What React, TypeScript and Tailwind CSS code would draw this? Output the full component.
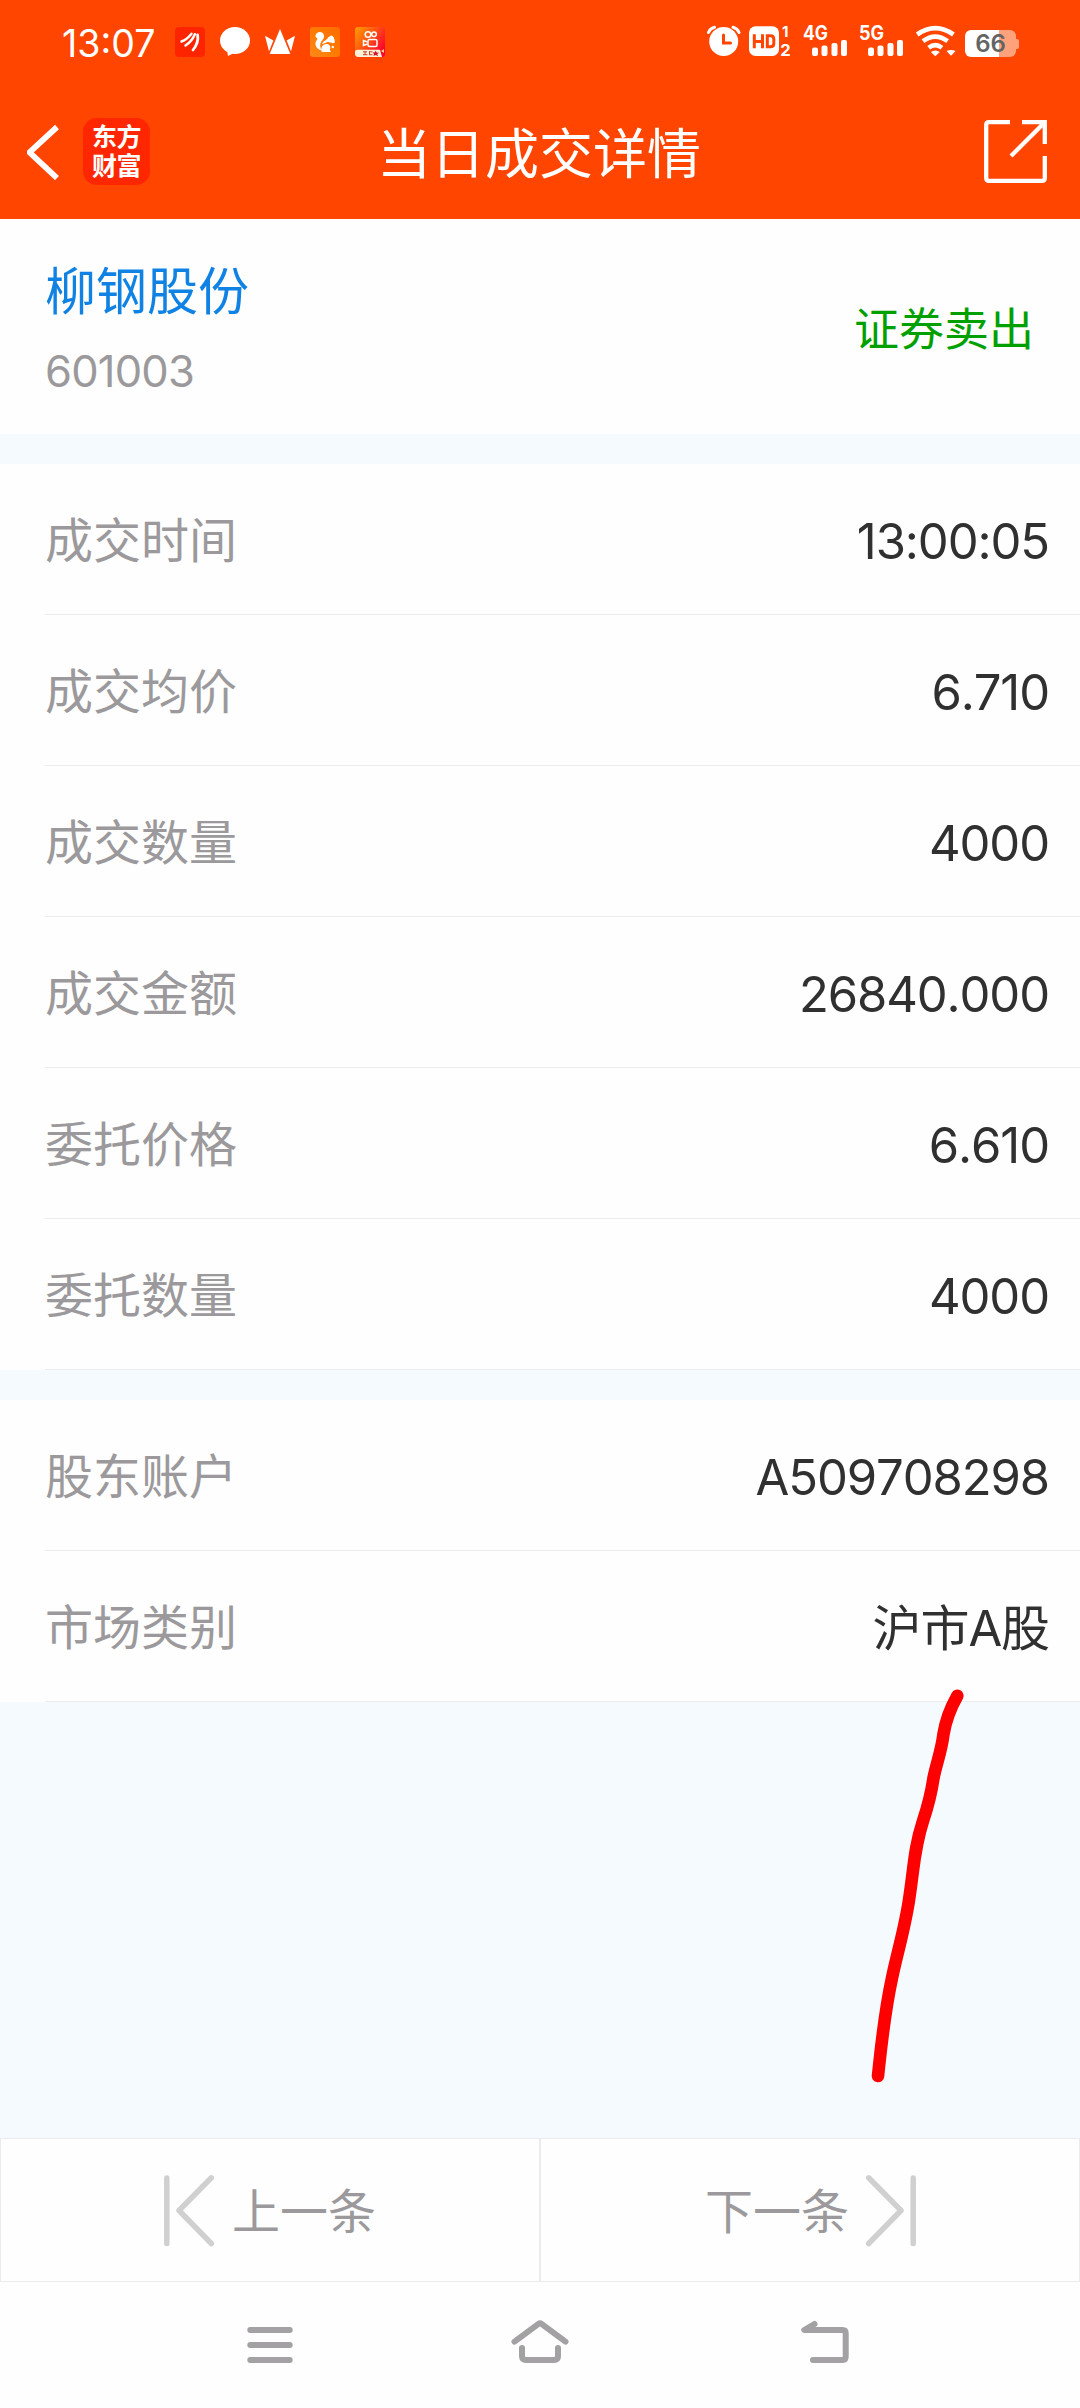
import React from "react";

const CJK = "font-['Inter','Noto_Sans_CJK_SC',sans-serif]";

function EastMoneyMini() {
  return (
    <svg className="h-[30px] w-[30px]" viewBox="0 0 30 30">
      <rect width="30" height="30" rx="4" fill="#ff2400" />
      <g fill="none" stroke="#fff" strokeLinecap="round">
        <path d="M6.500 14.500C11 13 14 10 16.500 6.800" strokeWidth="2.400" />
        <path d="M10.500 18.500C15 15.500 18 12 19.800 7.200" strokeWidth="2.500" />
        <path d="M18 23C22 18 23.500 13 22.600 8" strokeWidth="2.800" />
      </g>
    </svg>
  );
}

function ChatBubble() {
  return (
    <svg className="h-[30px] w-[30px]" viewBox="0 0 30 30">
      <ellipse cx="15" cy="13.500" rx="15" ry="13.500" fill="#fff" />
      <path d="M7 23L8 29L16 25Z" fill="#fff" />
    </svg>
  );
}

function Crown() {
  return (
    <svg className="h-[30px] w-[30px]" viewBox="0 0 30 30" fill="#fff">
      <path d="M15 2L25.300 27H4.700Z" />
      <path d="M0 8.800L8.400 13.500L4 24.500Z" />
      <path d="M30 8.800L21.600 13.500L26 24.500Z" />
    </svg>
  );
}

function Squirrel() {
  return (
    <svg className="h-[30px] w-[30px]" viewBox="0 0 30 30">
      <defs>
        <linearGradient id="uc" x1="0" y1="1" x2="1" y2="0">
          <stop offset="0" stopColor="#ff8a1c" />
          <stop offset="0.500" stopColor="#ff7a00" />
          <stop offset="1" stopColor="#ff6a00" />
        </linearGradient>
      </defs>
      <rect width="30" height="30" rx="3" fill="url(#uc)" />
      <path
        d="M7 6C9 4.500 12.500 4.800 13.700 7.500C15 10 13 12.500 11.300 14.500C9.500 17 10 20 11.500 23.500C6 22 4 17 6.500 13.500C8 11.500 7.500 11 6 10.500C5 9 5.500 7 7 6Z"
        fill="#fff"
      />
      <path d="M12 17C13.500 13 17 13.500 18 10.500L21 8.500C24 9 24.500 12 25 15.500C21 17.500 20 14 16.500 15.500C14.500 16.300 13 17 12 17Z" fill="#fff" />
      <path d="M11.500 24.500C10.500 19.500 13.500 16.500 17 17C20 17.500 21.300 20.500 19.800 23L21 25H12Z" fill="#fff" />
      <circle cx="22.800" cy="20" r="1.200" fill="#fff" />
    </svg>
  );
}

function VideoApp() {
  return (
    <svg className="h-[30px] w-[30px]" viewBox="0 0 30 30">
      <defs>
        <linearGradient id="ks" x1="0" y1="0" x2="1" y2="0.700">
          <stop offset="0" stopColor="#ffa000" />
          <stop offset="0.450" stopColor="#ff5a10" />
          <stop offset="1" stopColor="#ff0030" />
        </linearGradient>
      </defs>
      <rect width="30" height="30" rx="3" fill="url(#ks)" />
      <g fill="none" stroke="#fff" strokeWidth="1.500">
        <circle cx="13" cy="7.500" r="2.800" />
        <circle cx="19" cy="7.200" r="2.300" />
        <rect x="13" y="12.500" width="9" height="7" rx="1.500" />
        <path d="M12.500 15L8.500 13.500V18.500L12.500 17" />
      </g>
      <path d="M0 25C0 23.500 1 22.700 3 22.700H25L27 30H3C1 30 0 28.500 0 27Z" fill="#fff0d8" />
      <g fill="none" stroke="#c8402c" strokeWidth="1">
        <path d="M8 24.800H12M8 27.700H12.500M10 24.800V27.700M14 24.800H17.500M14 27.700H17.500M14.500 24.800V27.700" />
      </g>
      <path d="M20.500 23.500L21.700 25.500L24 25.700L22.300 27L23 29.200L20.700 28L18.500 29L19 27L17.700 25.500L20 25.300Z" fill="#d0142c" />
      <path d="M26 24L29 22V26Z" fill="#ffd27a" />
    </svg>
  );
}

function Alarm() {
  return (
    <svg className="h-[34px] w-[34px]" viewBox="708 26 34 34">
      <circle cx="724.700" cy="42.600" r="14.500" fill="#fff" />
      <path d="M724.500 36V44H731.500" fill="none" stroke="#ff4500" strokeWidth="3" strokeLinecap="round" />
      <path d="M709.500 33.500Q711 29.500 715.500 28.300M740 33.500Q738.500 29.500 734 28.300" fill="none" stroke="#fff" strokeWidth="3" strokeLinecap="round" />
    </svg>
  );
}

function HdVoice() {
  return (
    <svg className="h-[50px] w-[44px]" viewBox="750 18 44 50">
      <rect x="750" y="27.300" width="30" height="29.700" rx="6.500" fill="#fff" />
      <g fill="none" stroke="#ff4500" strokeWidth="3">
        <path d="M755.300 35.300V49.300M763.500 35.300V49.300M755.300 42.500H763.500" />
        <path d="M768.300 36.800H771.500Q774.800 36.800 774.800 40V44.600Q774.800 47.800 771.500 47.800H768.300Z" />
      </g>
      <text x="783" y="38.300" fontSize="15" fontWeight="700" fill="#fff" fontFamily="Inter">1</text>
      <text x="781.300" y="57" fontSize="16.500" fontWeight="700" fill="#fff" fontFamily="Inter">2</text>
    </svg>
  );
}

function Signal({ label }: { label: string }) {
  return (
    <svg className="h-[50px] w-[46px]" viewBox="0 18 46 50">
      <text x="0" y="41.300" fontSize="19.500" fontWeight="700" fill="#fff" fontFamily="Inter" textLength="25" lengthAdjust="spacingAndGlyphs">
        {label}
      </text>
      <g fill="#fff">
        <rect x="9" y="48.500" width="6" height="8.500" rx="2" />
        <rect x="18.500" y="46.500" width="6" height="10.500" rx="2" />
        <rect x="28.500" y="44" width="6" height="13" rx="2" />
        <rect x="38" y="41" width="6" height="16" rx="2" />
      </g>
    </svg>
  );
}

function Wifi() {
  return (
    <svg className="h-[34px] w-[42px]" viewBox="916 26 42 34">
      <g fill="none" stroke="#fff" strokeWidth="4.600">
        <path d="M918.200 35.500Q936.300 22.800 954.400 35.500" />
        <path d="M924 42.200Q936.300 33 948.600 42.200" />
        <path d="M929.700 48.700Q936.300 43.500 942.900 48.700" />
      </g>
      <path d="M931.800 53Q936.300 50 940.800 53L936.300 57.300Z" fill="#fff" />
      <path d="M947.500 52Q952 50 956.500 52L952 56.800Z" fill="#fff" />
    </svg>
  );
}

function Battery() {
  return (
    <div className="flex items-center">
      <div className={`flex h-[27px] w-[51px] items-center justify-center rounded-[6px] bg-[linear-gradient(to_right,#fff_66%,#ffa27c_66%)] text-[24px] leading-[27px] font-semibold text-[#646464] ${CJK}`}>
        66
      </div>
      <div className="h-[10px] w-[3px] rounded-r-[2px] bg-[#ffa27c]" />
    </div>
  );
}

function Row({ label, value }: { label: string; value: string }) {
  return (
    <div className="flex h-[151px] flex-col bg-[#fefefe]">
      <div className="flex flex-1 items-center justify-between pr-[31px] pl-[45px]">
        <span className="pt-1 text-[48px] leading-none text-[#9b999b]">{label}</span>
        <span className="pt-1 text-[49px] leading-none tracking-[-1.100px] text-[#303030] [font-kerning:none]">{value}</span>
      </div>
      <div className="ml-[45px] h-px bg-[#ececec]" />
    </div>
  );
}

const trade = [
  ["成交时间", "13:00:05"],
  ["成交均价", "6.710"],
  ["成交数量", "4000"],
  ["成交金额", "26840.000"],
  ["委托价格", "6.610"],
  ["委托数量", "4000"],
];

const account = [
  ["股东账户", "A509708298"],
  ["市场类别", "沪市A股"],
];

export default function App() {
  return (
    <div lang="zh-CN" className={`relative flex h-[2408px] w-[1080px] flex-col overflow-hidden bg-[#f5faff] ${CJK}`}>
      <header className="flex h-[219px] shrink-0 flex-col bg-[#ff4500] text-white">
        <div className="flex h-[84px] items-center justify-between pr-[61px] pl-[62px]">
          <div className="flex items-center">
            <span className="w-[113px] pt-1 text-[37.500px] leading-none">13:07</span>
            <div className="flex gap-[15px]">
              <EastMoneyMini />
              <ChatBubble />
              <Crown />
              <Squirrel />
              <VideoApp />
            </div>
          </div>
          <div className="flex items-center">
            <Alarm />
            <div className="ml-2"><HdVoice /></div>
            <div className="ml-[10px]"><Signal label="4G" /></div>
            <div className="ml-[10px]"><Signal label="5G" /></div>
            <div className="ml-[10px]"><Wifi /></div>
            <div className="ml-2 pt-[3px]"><Battery /></div>
          </div>
        </div>
        <div className="flex h-[135px] items-center justify-between pr-[33px] pl-[27px]">
          <div className="flex w-[260px] items-center">
            <svg className="h-[56px] w-[34px]" viewBox="27 123 34 56">
              <path d="M57 126L29.500 151.300L57 177" fill="none" stroke="#fff" strokeWidth="5.800" />
            </svg>
            <div className="ml-[22px] flex h-[67px] w-[67px] flex-col items-center justify-center rounded-[14px] bg-[#ff2600] text-[25px] leading-[29px] font-bold tracking-[-0.500px]">
              <span>东方</span>
              <span>财富</span>
            </div>
          </div>
          <h1 className="pt-[7px] text-[54px] leading-none">当日成交详情</h1>
          <div className="flex w-[256px] justify-end">
            <svg className="h-[63px] w-[63px]" viewBox="984 120 63 63">
              <g fill="none" stroke="#fff" strokeWidth="4.300">
                <path d="M1010 122.200H989Q986.200 122.200 986.200 125V178Q986.200 180.800 989 180.800H1042Q1044.800 180.800 1044.800 178V156" />
                <path d="M1022 122.200H1044.800V144" />
                <path d="M1044.800 122.200L1011 156" />
              </g>
            </svg>
          </div>
        </div>
      </header>

      <section className="flex h-[215px] shrink-0 items-center justify-between bg-[#fefefe] pt-[6px] pr-[46px] pl-[45px]">
        <div className="flex flex-col">
          <span className="text-[51px] leading-[60px] text-[#0f82e4]">柳钢股份</span>
          <span className="mt-[23px] text-[43.500px] leading-[52px] tracking-[-0.800px] text-[#9b999b]">601003</span>
        </div>
        <span className="text-[45px] leading-none text-[#00a000]">证券卖出</span>
      </section>

      <section className="mt-[30px] shrink-0">
        {trade.map(([label, value]) => (
          <Row key={label} label={label} value={value} />
        ))}
      </section>

      <section className="mt-[30px] shrink-0">
        {account.map(([label, value]) => (
          <Row key={label} label={label} value={value} />
        ))}
      </section>

      <div className="flex-1" />

      <div className="grid h-[144px] shrink-0 grid-cols-2 border-y border-[#ebebee] bg-[#fefefe] text-[48px] leading-none text-[#9b999b]">
        <div className="flex items-center border-x border-[#ebebee] pl-[162px]">
          <svg className="h-[75px] w-[54px]" viewBox="163 2172 54 75">
            <g fill="none" stroke="#d0d0d0" strokeWidth="5.500" strokeLinecap="round" strokeLinejoin="round">
              <path d="M166.800 2177V2242.500" />
              <path d="M211.300 2176.800L179 2209.500L211.300 2242.500" />
            </g>
          </svg>
          <span className="ml-[15px] pt-1">上一条</span>
        </div>
        <div className="flex items-center justify-end border-x border-[#ebebee] pr-[161px]">
          <span className="pt-1">下一条</span>
          <svg className="ml-[15px] h-[75px] w-[54px]" viewBox="864 2172 54 75">
            <g fill="none" stroke="#d0d0d0" strokeWidth="5.500" strokeLinecap="round" strokeLinejoin="round">
              <path d="M913.200 2177V2242.500" />
              <path d="M868.700 2176.800L901 2209.500L868.700 2242.500" />
            </g>
          </svg>
        </div>
      </div>

      <nav className="flex h-[126px] shrink-0 items-center bg-[#fefefe] pl-[240px]">
        <svg className="h-[60px] w-[60px]" viewBox="240 2315 60 60">
          <path d="M250.300 2330H289.700M250.300 2345H289.700M250.300 2360H289.700" stroke="#a3a1a3" strokeWidth="6" strokeLinecap="round" />
        </svg>
        <svg className="ml-[210px] h-[60px] w-[60px]" viewBox="510 2315 60 60">
          <g fill="none" stroke="#a3a1a3" strokeWidth="6" strokeLinecap="round" strokeLinejoin="round">
            <path d="M514.500 2341.700L538.500 2323.800Q540 2322.700 541.500 2323.800L565.500 2341.700" />
            <path d="M522 2348V2356Q522 2360 526 2360H554Q558 2360 558 2356V2348" />
          </g>
        </svg>
        <svg className="ml-[225px] h-[60px] w-[60px]" viewBox="795 2315 60 60">
          <path d="M814.500 2324L804.300 2330H842.500Q845.700 2330 845.700 2333.200V2356.800Q845.700 2360 842.500 2360H813" fill="none" stroke="#a3a1a3" strokeWidth="6" strokeLinecap="round" strokeLinejoin="round" />
        </svg>
      </nav>

      {/* Hand-drawn marker stroke lying over the page */}
      <svg className="pointer-events-none absolute top-[1680px] left-[860px] h-[420px] w-[120px]" viewBox="860 1680 120 420">
        <path
          d="M957.300 1695.800C951.500 1706 946 1719 943.500 1734C941.500 1751 936 1765 933.500 1778C931 1795 929 1803 923 1821C914.500 1847 914 1866 910 1893C906 1925 898 1949 892 1978C884 2015 881 2048 878 2076"
          fill="none"
          stroke="#ff0000"
          strokeWidth="12.600"
          strokeLinecap="round"
        />
      </svg>
    </div>
  );
}
